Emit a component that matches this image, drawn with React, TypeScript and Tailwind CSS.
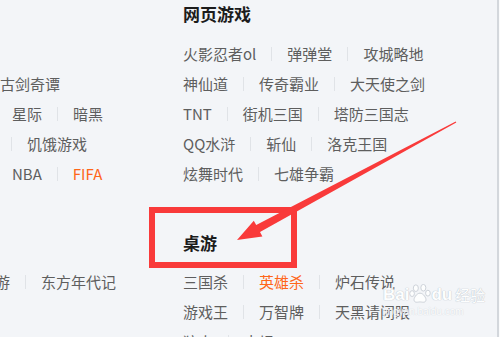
import React from "react";
import clsx from "clsx";

type Item = { t: string; hot?: boolean };

const Row = ({ items, className }: { items: Item[]; className?: string }) => (
  <div
    className={clsx(
      "flex h-[30px] shrink-0 items-center whitespace-nowrap text-[15px] leading-[20px]",
      className
    )}
  >
    {items.map((it, i) => (
      <React.Fragment key={i}>
        {i > 0 && (
          <span className="mx-[15px] h-[14px] w-px shrink-0 bg-[#e0e3e7]" />
        )}
        <span className={it.hot ? "text-[#ff661a]" : "text-[#5e5e5e]"}>
          {it.t}
        </span>
      </React.Fragment>
    ))}
  </div>
);

const Heading = ({ children, className }: { children?: React.ReactNode; className?: string }) => (
  <div
    className={clsx(
      "flex h-[28px] shrink-0 items-center text-[17px] font-bold leading-[24px] text-[#1c1c1c]",
      className
    )}
  >
    {children}
  </div>
);

const Arrow = () => (
  <svg
    className="pointer-events-none absolute left-0 top-0"
    width="500"
    height="337"
    viewBox="0 0 500 337"
  >
    <polygon
      fill="#f93a3a"
      points="237,240 262.4,236.5 260,232.1 456.3,122.6 455.7,121.4 256.2,225.1 253.8,220.7"
    />
  </svg>
);

const Paw = () => (
  <svg width="22" height="20" viewBox="0 0 26 24">
    <g fill="#ffffff" stroke="#c9cfd6" strokeWidth="1.2">
      <ellipse cx="8" cy="5" rx="3" ry="4" />
      <ellipse cx="17" cy="4.5" rx="3" ry="4" />
      <ellipse cx="3.5" cy="11.5" rx="2.8" ry="3.5" />
      <ellipse cx="22.5" cy="11" rx="2.8" ry="3.5" />
      <path d="M13 11 C9 11 5 17 6 20 C7 23 11 21.5 13 21.5 C15 21.5 19 23 20 20 C21 17 17 11 13 11 Z" />
    </g>
  </svg>
);

export default function App() {
  return (
    <div className="relative flex h-[337px] w-[500px] overflow-hidden bg-[#f3f5f8] font-['Noto_Sans_CJK_SC',sans-serif]">
      {/* left column, cut off by the window */}
      <div className="flex w-[183px] shrink-0 flex-col">
        <Heading className="mb-[11px]" />
        <Row items={[]} />
        <Row items={[{ t: "古剑奇谭" }]} />
        <Row className="ml-[-79px]" items={[{ t: "魔兽世界" }, { t: "星际" }, { t: "暗黑" }]} />
        <Row className="ml-[-64px]" items={[{ t: "我的世界" }, { t: "饥饿游戏" }]} />
        <Row
          className="ml-[-79px]"
          items={[{ t: "实况足球" }, { t: "NBA" }, { t: "FIFA", hot: true }]}
        />
        <Heading className="mb-[10px] mt-[40px]" />
        <Row className="ml-[-50px]" items={[{ t: "梦幻西游" }, { t: "东方年代记" }]} />
      </div>

      {/* right column */}
      <div className="flex flex-1 flex-col">
        <Heading className="mb-[11px]">网页游戏</Heading>
        <Row items={[{ t: "火影忍者ol" }, { t: "弹弹堂" }, { t: "攻城略地" }]} />
        <Row items={[{ t: "神仙道" }, { t: "传奇霸业" }, { t: "大天使之剑" }]} />
        <Row items={[{ t: "TNT" }, { t: "街机三国" }, { t: "塔防三国志" }]} />
        <Row items={[{ t: "QQ水浒" }, { t: "斩仙" }, { t: "洛克王国" }]} />
        <Row items={[{ t: "炫舞时代" }, { t: "七雄争霸" }]} />
        <Heading className="mb-[10px] mt-[40px]">桌游</Heading>
        <Row items={[{ t: "三国杀" }, { t: "英雄杀", hot: true }, { t: "炉石传说" }]} />
        <Row items={[{ t: "游戏王" }, { t: "万智牌" }, { t: "天黑请闭眼" }]} />
        <Row items={[{ t: "狼人" }, { t: "卡坦" }]} />
      </div>

      <div className="w-[2px] shrink-0 bg-[#d3d7dc]" />
      <div className="w-px shrink-0 bg-[#fafbfc]" />

      {/* annotation: red box + arrow */}
      <div className="pointer-events-none absolute left-[149px] top-[207px] h-[61px] w-[148px] border-[6px] border-[#f93a3a]" />
      <Arrow />

      {/* watermark */}
      <div className="pointer-events-none absolute left-[383px] top-[284px] flex flex-col items-start opacity-90">
        <div className="flex items-end whitespace-nowrap font-['Liberation_Sans',sans-serif] text-[17px] font-bold leading-[18px] text-white [text-shadow:0_0_1px_#b8c0c9,0_0_1px_#b8c0c9]">
          <span>Bai</span>
          <Paw />
          <span>du</span>
          <span className="ml-[3px] font-['Noto_Sans_CJK_SC',sans-serif] text-[15px] font-normal">经验</span>
        </div>
        <div className="mt-[2px] whitespace-nowrap font-['Liberation_Sans',sans-serif] text-[10px] leading-[11px] text-white [text-shadow:0_0_1px_#b8c0c9]">
          jingyan.baidu.com
        </div>
      </div>
    </div>
  );
}
